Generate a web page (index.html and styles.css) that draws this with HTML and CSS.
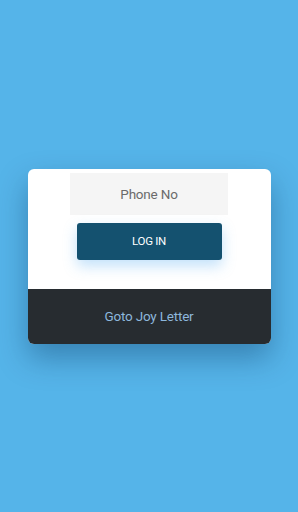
FILE: index.html
```html
<!DOCTYPE html>
<html lang="en">

<head>
    <meta charset="UTF-8">
    <meta name="viewport" content="width=device-width, initial-scale=1.0">
    <title>Login</title>
    <link rel="stylesheet" href="styles.css">
</head>

<body>

    <div class="card">
        <div class="card-body">
            <input class="phone" type="text" placeholder="Phone No">
            <button class="login-btn">LOG IN</button>
        </div>
        <div class="card-footer">
            <a href="#" class="joy-link">Goto Joy Letter</a>
        </div>
    </div>

</body>

</html>
```

FILE: styles.css
```css
html,
body {
    height: 100%;
}

body {
    font-family: Roboto, "Noto Sans", Arial, sans-serif;
    margin: 0;
    padding: 0;
    background: #55b4e9;
    display: flex;
    align-items: center;
    justify-content: center;
}

.card {
    width: 243px;
    background: #fff;
    border-radius: 6px;
    overflow: hidden;
    box-shadow: 0 14px 30px rgba(0, 40, 80, 0.35);
}

.card-body {
    display: flex;
    flex-direction: column;
    align-items: center;
    padding: 4px 0 0;
    height: 116px;
}

.phone {
    width: 158px;
    height: 42px;
    box-sizing: border-box;
    border: none;
    outline: none;
    background: #f5f5f5;
    text-align: center;
    font-family: inherit;
    font-size: 13.5px;
    letter-spacing: -0.2px;
    color: #555;
}

.phone::placeholder {
    color: #6b6b6b;
}

.login-btn {
    margin-top: 8px;
    width: 145px;
    height: 37px;
    border: none;
    border-radius: 3px;
    background: #14516f;
    color: #fff;
    font-family: inherit;
    font-size: 11.5px;
    letter-spacing: -0.3px;
    box-shadow: 0 6px 14px rgba(80, 170, 240, 0.35);
}

.card-footer {
    background: #272c30;
    height: 55px;
    display: flex;
    align-items: center;
    justify-content: center;
}

.joy-link {
    color: #8db7dc;
    text-decoration: none;
    font-size: 13.5px;
    letter-spacing: -0.2px;
}
```
